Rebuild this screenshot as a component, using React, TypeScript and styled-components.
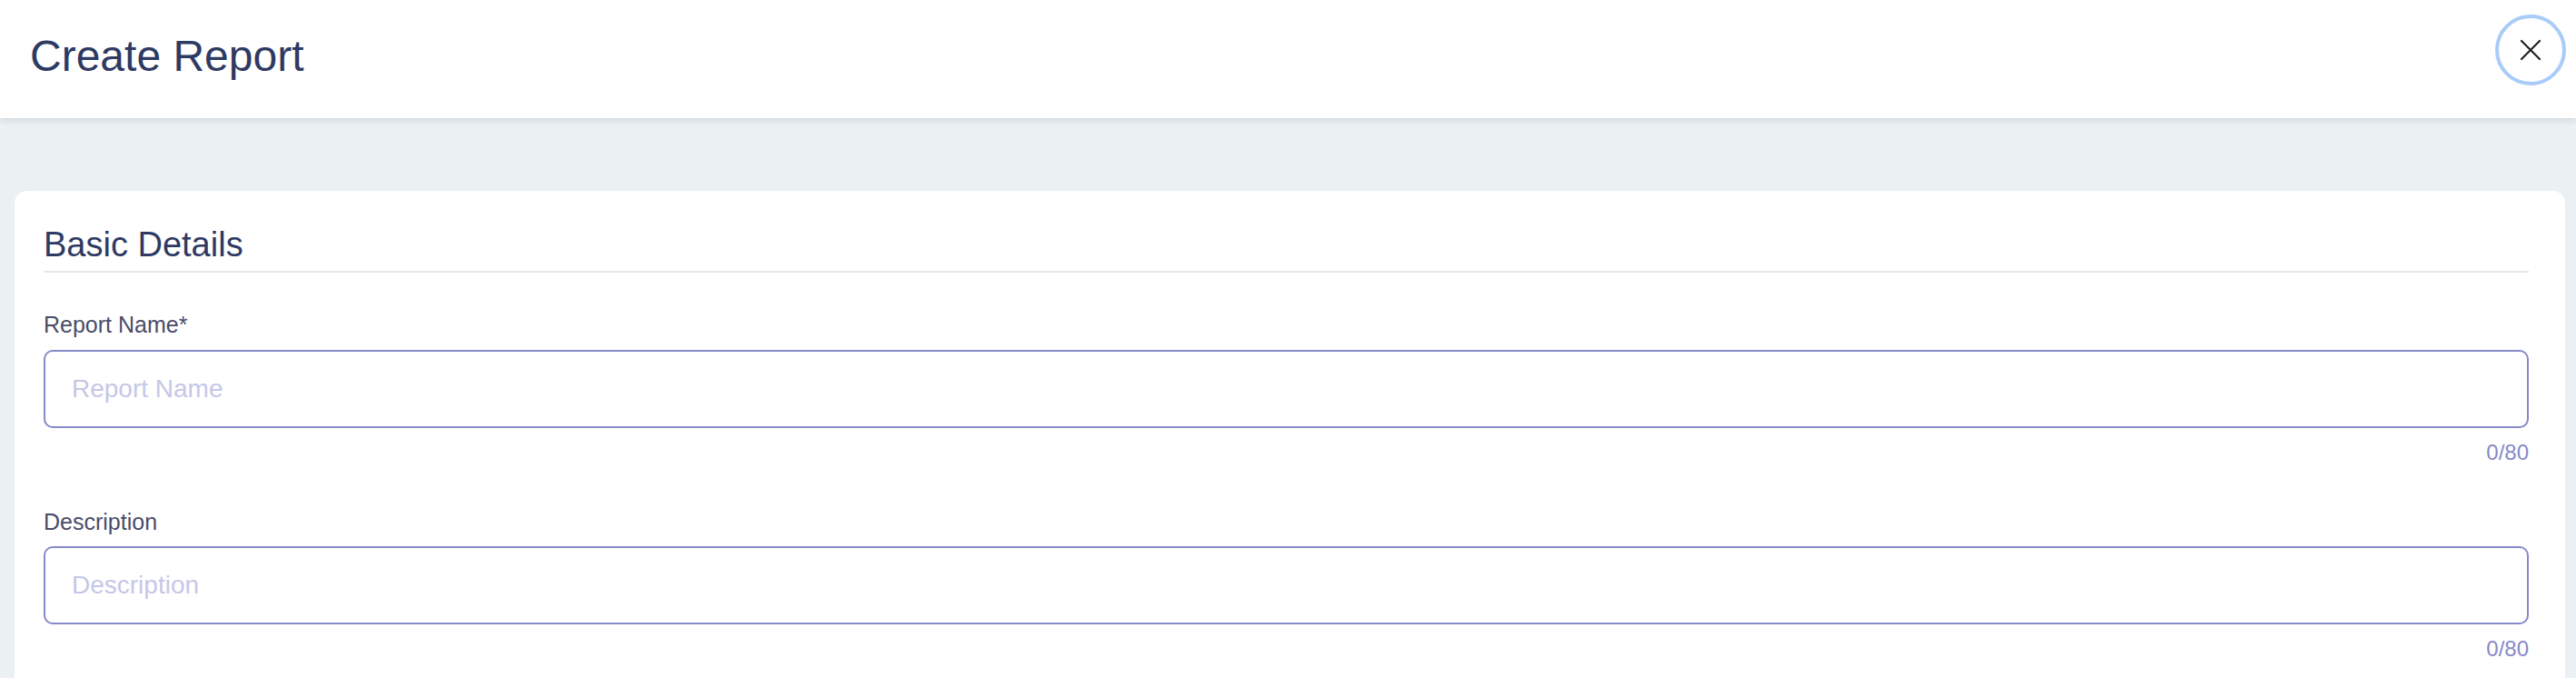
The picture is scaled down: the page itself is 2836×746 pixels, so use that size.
import React from "react";
import styled, { createGlobalStyle } from "styled-components";

const GlobalStyle = createGlobalStyle`
  html, body {
    margin: 0;
    padding: 0;
    background: #ebf0f3;
    font-family: "Liberation Sans", Arial, Helvetica, sans-serif;
  }
  * { box-sizing: border-box; }
`;

const Page = styled.div`
  min-height: 746px;
  background: #ebf0f3;
  display: flex;
  flex-direction: column;
`;

const Header = styled.header`
  height: 130px;
  background: #ffffff;
  box-shadow: 0 2px 8px rgba(40, 50, 70, 0.14);
  display: flex;
  align-items: flex-start;
  justify-content: space-between;
  padding: 16px 11px 0 33px;
  position: relative;
  z-index: 1;
`;

const Title = styled.h1`
  margin: 22px 0 0;
  font-size: 48px;
  line-height: 1;
  font-weight: 400;
  color: #2e3a63;
`;

const CloseButton = styled.button`
  width: 78px;
  height: 78px;
  border-radius: 50%;
  border: 4px solid #a9cbf8;
  background: #ffffff;
  display: flex;
  align-items: center;
  justify-content: center;
  padding: 0;
  cursor: pointer;
`;

const Body = styled.main`
  padding: 80px 12px 0 16px;
`;

const Card = styled.section`
  background: #ffffff;
  border-radius: 14px 14px 0 0;
  padding: 40px 40px 40px 32px;
  min-height: 600px;
`;

const SectionTitle = styled.h2`
  margin: 0;
  font-size: 38px;
  line-height: 1;
  font-weight: 400;
  color: #2e3a63;
  padding-bottom: 10px;
  border-bottom: 2px solid #e6e7ea;
`;

const Field = styled.div<{ $top: number }>`
  margin-top: ${(p) => p.$top}px;
  display: flex;
  flex-direction: column;
`;

const Label = styled.label`
  font-size: 25px;
  line-height: 1;
  color: #4a4c68;
  margin-bottom: 14.5px;
`;

const Input = styled.input`
  height: 86px;
  width: 100%;
  border: 2px solid #8789c8;
  border-radius: 10px;
  padding: 0 29px;
  font-family: "Liberation Sans", Arial, Helvetica, sans-serif;
  font-size: 28px;
  color: #2e3a63;
  outline: none;
  background: #ffffff;
  &::placeholder {
    color: #c5c7e8;
  }
`;

const Counter = styled.div`
  align-self: flex-end;
  margin-top: 15px;
  font-size: 24px;
  line-height: 1;
  color: #8789c8;
`;

const CloseIcon = () => (
  <svg width="24" height="24" viewBox="0 0 24 24" fill="none">
    <path d="M2 2 L22 22 M22 2 L2 22" stroke="#222" strokeWidth="2.2" strokeLinecap="round" />
  </svg>
);

export default function App() {
  return (
    <>
      <GlobalStyle />
      <Page>
        <Header>
          <Title>Create Report</Title>
          <CloseButton aria-label="Close">
            <CloseIcon />
          </CloseButton>
        </Header>
        <Body>
          <Card>
            <SectionTitle>Basic Details</SectionTitle>
            <Field $top={45}>
              <Label>Report Name*</Label>
              <Input placeholder="Report Name" />
              <Counter>0/80</Counter>
            </Field>
            <Field $top={52}>
              <Label>Description</Label>
              <Input placeholder="Description" />
              <Counter>0/80</Counter>
            </Field>
          </Card>
        </Body>
      </Page>
    </>
  );
}
